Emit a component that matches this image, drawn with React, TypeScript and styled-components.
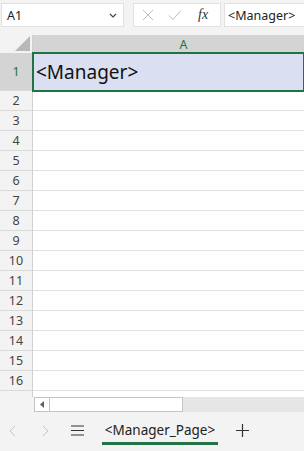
import React from 'react';
import styled, { createGlobalStyle } from 'styled-components';

const GlobalStyle = createGlobalStyle`
  html, body {
    margin: 0;
    padding: 0;
    background: #f3f3f3;
  }
`;

const Sheet = styled.div`
  width: 304px;
  height: 451px;
  overflow: hidden;
  display: flex;
  flex-direction: column;
  background: #f3f3f3;
  font-family: 'Noto Sans', 'Open Sans', sans-serif;
`;

const FormulaBar = styled.div`
  height: 35px;
  box-sizing: border-box;
  padding: 3px 0 0 1px;
  display: flex;
  align-items: flex-start;
`;

const NameBox = styled.div`
  width: 123px;
  height: 24px;
  box-sizing: border-box;
  background: #fff;
  border: 1px solid #e1e1e1;
  display: flex;
  align-items: center;
  justify-content: space-between;
  padding: 0 6px 0 5px;
  font-size: 12.5px;
  color: #222;
`;

const ActionBox = styled.div`
  width: 88px;
  height: 24px;
  margin-left: 9px;
  box-sizing: border-box;
  background: #fff;
  border: 1px solid #e1e1e1;
  display: flex;
  align-items: center;
  padding: 0 0 0 8px;
  gap: 14px;
`;

const Fx = styled.span`
  font-family: 'Liberation Serif', 'DejaVu Serif', serif;
  font-style: italic;
  font-size: 14px;
  color: #333;
  margin-left: 2px;
`;

const FormulaInput = styled.div`
  flex: 1;
  height: 24px;
  margin-left: 3px;
  box-sizing: border-box;
  background: #fff;
  border: 1px solid #e1e1e1;
  border-right: none;
  display: flex;
  align-items: center;
  padding-left: 3px;
  font-size: 12.5px;
  color: #222;
  white-space: nowrap;
  overflow: hidden;
`;

const Grid = styled.div`
  display: flex;
  flex-direction: column;
  background: #fff;
  height: 362px;
  overflow: hidden;
`;

const Row = styled.div<{ $h: number }>`
  display: flex;
  height: ${({ $h }) => $h}px;
  flex-shrink: 0;
`;

const RowHead = styled.div<{ $active?: boolean }>`
  width: 33px;
  flex-shrink: 0;
  box-sizing: border-box;
  border-right: 1px solid #d0d0d0;
  border-bottom: 1px solid #dadada;
  background: ${({ $active }) => ($active ? '#d4d4d4' : '#f3f3f3')};
  color: ${({ $active }) => ($active ? '#217346' : '#444')};
  font-size: 12.5px;
  display: flex;
  align-items: center;
  justify-content: center;
`;

const Corner = styled.div`
  width: 33px;
  flex-shrink: 0;
  box-sizing: border-box;
  border-right: 1px solid #d0d0d0;
  background: #f3f3f3;
  display: flex;
  align-items: flex-end;
  justify-content: flex-end;
  padding: 0 2px 2px 0;
`;

const ColHead = styled.div`
  flex: 1;
  background: #d4d4d4;
  color: #217346;
  font-size: 12.5px;
  display: flex;
  align-items: center;
  justify-content: center;
  padding-left: 30px;
`;

const Cell = styled.div<{ $selected?: boolean }>`
  flex: 1;
  box-sizing: border-box;
  border-bottom: 1px solid #e0e0e0;
  background: ${({ $selected }) => ($selected ? '#dae0f2' : '#fff')};
  ${({ $selected }) =>
    $selected
      ? `
    position: relative;
    z-index: 1;
    outline: 2px solid #217346;
    outline-offset: -1px;
    font-size: 19px;
    color: #111;
    display: flex;
    align-items: center;
    padding-left: 3px;
  `
      : ''}
`;

const ScrollRow = styled.div`
  height: 15px;
  display: flex;
  padding-left: 34px;
  background: #f3f3f3;
`;

const ScrollBtn = styled.div`
  width: 16px;
  box-sizing: border-box;
  border: 1px solid #c4c4c4;
  background: #fff;
  display: flex;
  align-items: center;
  justify-content: center;
`;

const Thumb = styled.div`
  width: 133px;
  box-sizing: border-box;
  border: 1px solid #c4c4c4;
  border-left: none;
  background: #fff;
`;

const Track = styled.div`
  flex: 1;
  background: #e6e6e6;
`;

const TabBar = styled.div`
  flex: 1;
  display: flex;
  align-items: flex-start;
  padding-top: 4px;
  background: #f3f3f3;
`;

const NavBtn = styled.div<{ $w: number }>`
  width: ${({ $w }) => $w}px;
  height: 29px;
  display: flex;
  align-items: center;
  justify-content: center;
`;

const Tab = styled.div`
  margin-left: 13px;
  width: 116px;
  height: 29px;
  box-sizing: border-box;
  border-bottom: 3px solid #217346;
  display: flex;
  align-items: center;
  justify-content: center;
  padding-top: 2px;
  font-size: 13.5px;
  color: #222;
`;

const AddBtn = styled.div`
  width: 48px;
  height: 29px;
  display: flex;
  align-items: center;
  justify-content: center;
`;

const rows = Array.from({ length: 15 }, (_, i) => i + 2);

export default function App() {
  return (
    <>
      <GlobalStyle />
      <Sheet>
        <FormulaBar>
          <NameBox>
            <span>A1</span>
            <svg width="8" height="5" viewBox="0 0 8 5">
              <path d="M1 1l3 3 3-3" fill="none" stroke="#444" strokeWidth="1.2" />
            </svg>
          </NameBox>
          <ActionBox>
            <svg width="12" height="12" viewBox="0 0 12 12">
              <path d="M1 1l10 10M11 1L1 11" stroke="#bcbcbc" strokeWidth="1" />
            </svg>
            <svg width="14" height="12" viewBox="0 0 14 12">
              <path d="M1 6.5l4 4L13 1.5" fill="none" stroke="#bcbcbc" strokeWidth="1" />
            </svg>
            <Fx>fx</Fx>
          </ActionBox>
          <FormulaInput>&lt;Manager&gt;</FormulaInput>
        </FormulaBar>

        <Grid>
          <Row $h={18}>
            <Corner>
              <svg width="15" height="15" viewBox="0 0 15 15">
                <path d="M15 0V15H0Z" fill="#b8b8b8" />
              </svg>
            </Corner>
            <ColHead>A</ColHead>
          </Row>
          <Row $h={38}>
            <RowHead $active>1</RowHead>
            <Cell $selected>&lt;Manager&gt;</Cell>
          </Row>
          {rows.map((n) => (
            <Row key={n} $h={20}>
              <RowHead>{n}</RowHead>
              <Cell />
            </Row>
          ))}
          <Row $h={20}>
            <RowHead />
            <Cell />
          </Row>
        </Grid>

        <ScrollRow>
          <ScrollBtn>
            <svg width="5" height="7" viewBox="0 0 5 7">
              <path d="M4 0V7L0 3.5Z" fill="#606060" />
            </svg>
          </ScrollBtn>
          <Thumb />
          <Track />
        </ScrollRow>

        <TabBar>
          <NavBtn $w={25}>
            <svg width="7" height="12" viewBox="0 0 7 12">
              <path d="M6 1L1 6l5 5" fill="none" stroke="#c4c4c4" strokeWidth="1" />
            </svg>
          </NavBtn>
          <NavBtn $w={40}>
            <svg width="7" height="12" viewBox="0 0 7 12">
              <path d="M1 1l5 5-5 5" fill="none" stroke="#c4c4c4" strokeWidth="1" />
            </svg>
          </NavBtn>
          <NavBtn $w={24}>
            <svg width="13" height="11" viewBox="0 0 13 11">
              <path d="M0 1h13M0 5.5h13M0 10h13" stroke="#333" strokeWidth="1.2" />
            </svg>
          </NavBtn>
          <Tab>&lt;Manager_Page&gt;</Tab>
          <AddBtn>
            <svg width="13" height="13" viewBox="0 0 13 13">
              <path d="M6.5 0v13M0 6.5h13" stroke="#333" strokeWidth="1.2" />
            </svg>
          </AddBtn>
        </TabBar>
      </Sheet>
    </>
  );
}
